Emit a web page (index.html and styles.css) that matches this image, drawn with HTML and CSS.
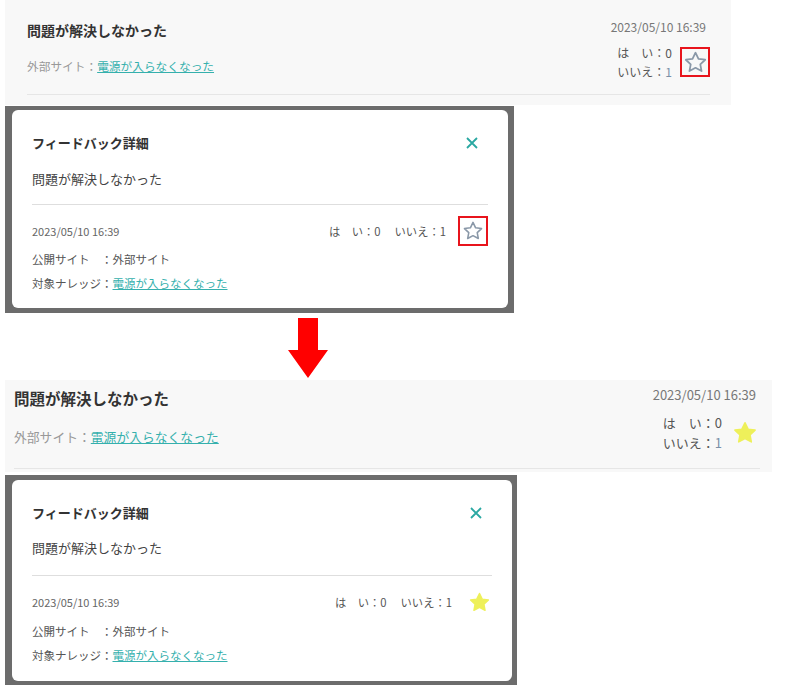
FILE: index.html
```html
<html>
    <head>
        <title>フィードバック詳細</title>
        <link rel="stylesheet" href="styles.css">
    </head>
    <body>
        <div class="item">
            <div class="item-inner">
                <div class="item-main">
                    <div class="item-title">問題が解決しなかった</div>
                    <div class="item-sub">外部サイト：<a href="#">電源が入らなくなった</a></div>
                </div>
                <div class="item-side">
                    <div class="item-date">2023/05/10 16:39</div>
                    <div class="item-votes">
                        <div class="votes">
                            <div>は　い：0</div>
                            <div>いいえ：<span class="count">1</span></div>
                        </div>
                        <span class="star-box"><svg class="star" viewBox="0 0 24 24"><path d="M12 2.6l2.85 5.9 6.45.85-4.7 4.45 1.2 6.4L12 17.1l-5.8 3.1 1.2-6.4-4.7-4.45 6.45-.85z"/></svg></span>
                    </div>
                </div>
            </div>
        </div>

        <div class="overlay">
            <div class="modal">
                <div class="modal-head">
                    <div class="modal-title">フィードバック詳細</div>
                    <svg class="close" viewBox="0 0 12 12"><path d="M1 1l10 10M11 1L1 11"/></svg>
                </div>
                <div class="modal-text">問題が解決しなかった</div>
                <div class="modal-meta">
                    <div class="modal-date">2023/05/10 16:39</div>
                    <div class="modal-votes">
                        <span>は　い：0</span>
                        <span>いいえ：1</span>
                        <span class="star-box"><svg class="star" viewBox="0 0 24 24"><path d="M12 2.6l2.85 5.9 6.45.85-4.7 4.45 1.2 6.4L12 17.1l-5.8 3.1 1.2-6.4-4.7-4.45 6.45-.85z"/></svg></span>
                    </div>
                </div>
                <div class="modal-info">公開サイト　：外部サイト</div>
                <div class="modal-info">対象ナレッジ：<a href="#">電源が入らなくなった</a></div>
            </div>
        </div>

        <div class="arrow">
            <svg viewBox="0 0 40 60"><path d="M10 0h20v32h10L20 60 0 32h10z"/></svg>
        </div>

        <div class="item item-lg">
            <div class="item-inner">
                <div class="item-main">
                    <div class="item-title">問題が解決しなかった</div>
                    <div class="item-sub">外部サイト：<a href="#">電源が入らなくなった</a></div>
                </div>
                <div class="item-side">
                    <div class="item-date">2023/05/10 16:39</div>
                    <div class="item-votes">
                        <div class="votes">
                            <div>は　い：0</div>
                            <div>いいえ：<span class="count">1</span></div>
                        </div>
                        <svg class="star-on" viewBox="0 0 24 24"><path d="M12 2.6l2.85 5.9 6.45.85-4.7 4.45 1.2 6.4L12 17.1l-5.8 3.1 1.2-6.4-4.7-4.45 6.45-.85z"/></svg>
                    </div>
                </div>
            </div>
        </div>

        <div class="overlay overlay-lg">
            <div class="modal">
                <div class="modal-head">
                    <div class="modal-title">フィードバック詳細</div>
                    <svg class="close" viewBox="0 0 12 12"><path d="M1 1l10 10M11 1L1 11"/></svg>
                </div>
                <div class="modal-text">問題が解決しなかった</div>
                <div class="modal-meta">
                    <div class="modal-date">2023/05/10 16:39</div>
                    <div class="modal-votes">
                        <span>は　い：0</span>
                        <span>いいえ：1</span>
                        <svg class="star-on" viewBox="0 0 24 24"><path d="M12 2.6l2.85 5.9 6.45.85-4.7 4.45 1.2 6.4L12 17.1l-5.8 3.1 1.2-6.4-4.7-4.45 6.45-.85z"/></svg>
                    </div>
                </div>
                <div class="modal-info">公開サイト　：外部サイト</div>
                <div class="modal-info">対象ナレッジ：<a href="#">電源が入らなくなった</a></div>
            </div>
        </div>
    </body>
</html>
```

FILE: styles.css
```css
body {
    margin: 0;
    background: #fff;
    color: #444;
    font-family: "Noto Sans CJK JP", "Noto Sans", sans-serif;
}
a {
    color: #35b0ad;
}

/* list item */
.item {
    margin-left: 5px;
    width: 726px;
    box-sizing: border-box;
    background: #f8f8f8;
    padding: 19px 21px 10px 22px;
}
.item-inner {
    display: flex;
    justify-content: space-between;
    border-bottom: 1px solid #e6e6e6;
    padding-bottom: 13px;
}
.item-title {
    margin-top: 1px;
    font-size: 14px;
    line-height: 20px;
    font-weight: bold;
    color: #333;
}
.item-sub {
    margin-top: 18px;
    font-size: 11.7px;
    line-height: 16px;
    color: #999;
}
.item-side {
    display: flex;
    flex-direction: column;
    align-items: flex-end;
}
.item-date {
    margin-right: 4px;
    font-size: 12px;
    line-height: 16px;
    color: #777;
}
.item-votes {
    display: flex;
    align-items: center;
    margin-top: 8px;
}
.votes {
    font-size: 12px;
    line-height: 19px;
    color: #555;
}
.count {
    color: #7a90a8;
}
.star-box {
    display: flex;
    align-items: center;
    justify-content: center;
    width: 30px;
    height: 30px;
    box-sizing: border-box;
    border: 2px solid #e8141c;
    margin-left: 8px;
}
.star {
    width: 25px;
    height: 25px;
    fill: none;
    stroke: #8a98a8;
    stroke-width: 1.7;
    stroke-linejoin: round;
}
.star-on {
    width: 26px;
    height: 26px;
    fill: #eef05a;
    stroke: #eef05a;
    stroke-width: 1.5;
    stroke-linejoin: round;
}

.item-lg {
    width: 767px;
    padding: 6px 12px 3px 9px;
}
.item-lg .item-inner {
    padding-bottom: 15px;
}
.item-lg .item-title {
    font-size: 15.5px;
    line-height: 22px;
}
.item-lg .item-sub {
    margin-top: 19px;
    font-size: 12.8px;
    line-height: 18px;
}
.item-lg .item-date {
    font-size: 13px;
    line-height: 18px;
}
.item-lg .item-votes {
    margin-top: 9px;
}
.item-lg .votes {
    font-size: 13px;
    line-height: 20px;
}
.item-lg .star-on {
    margin-left: 10px;
    margin-right: 2px;
}

/* modal */
.overlay {
    margin: 1px 0 0 5px;
    width: 509px;
    box-sizing: border-box;
    background: #6c6c6c;
    padding: 4px 6px 5px 7px;
}
.modal {
    background: #fff;
    border-radius: 6px;
    padding: 23px 20px 13px 20px;
}
.modal-head {
    display: flex;
    justify-content: space-between;
    align-items: center;
}
.modal-title {
    font-size: 13px;
    line-height: 20px;
    font-weight: bold;
    color: #333;
}
.close {
    width: 12px;
    height: 12px;
    margin-right: 10px;
    stroke: #2aa8a2;
    stroke-width: 1.8;
}
.modal-text {
    margin-top: 16px;
    padding-bottom: 15px;
    border-bottom: 1px solid #dedede;
    font-size: 13px;
    line-height: 20px;
    color: #444;
}
.modal-meta {
    display: flex;
    justify-content: space-between;
    align-items: center;
    height: 30px;
    margin-top: 11px;
}
.modal-date {
    font-size: 11px;
    color: #666;
}
.modal-votes {
    display: flex;
    align-items: center;
    gap: 14px;
    font-size: 11.3px;
    color: #555;
}
.modal-votes .star-box {
    margin-left: -2px;
}
.modal-votes .star {
    width: 22px;
    height: 22px;
}
.modal-info {
    font-size: 11.5px;
    line-height: 24px;
    color: #555;
}
.modal-meta + .modal-info {
    margin-top: 1px;
}

.overlay-lg {
    margin-top: 3px;
    width: 512px;
    padding: 5px 5px 4px 7px;
}
.overlay-lg .modal {
    padding-bottom: 14px;
}
.overlay-lg .modal-text {
    margin-top: 15px;
    padding-bottom: 17px;
}
.overlay-lg .modal-meta + .modal-info {
    margin-top: 2px;
}
.overlay-lg .star-on {
    width: 23px;
    height: 23px;
    margin-left: 2px;
    margin-right: 1px;
}

.arrow {
    height: 62px;
    padding: 5px 0 0 288px;
}
.arrow svg {
    width: 40px;
    height: 60px;
    fill: #ff0000;
}
```
